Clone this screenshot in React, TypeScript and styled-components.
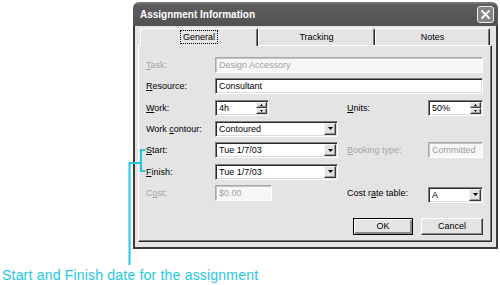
import React from "react";
import styled, { createGlobalStyle, css } from "styled-components";

const Global = createGlobalStyle`
  html, body { margin: 0; padding: 0; background: #fff; }
  body { font-family: "Liberation Sans", Arial, sans-serif; }
`;

const Page = styled.div`
  position: relative;
  width: 500px;
  height: 285px;
  overflow: hidden;
  display: flex;
  flex-direction: column;
  align-items: flex-start;
`;

const Dialog = styled.div`
  margin: 2px 0 0 133px;
  width: 365px;
  display: flex;
  flex-direction: column;
  border-radius: 6px 6px 0 0;
  overflow: hidden;
`;

const TitleBar = styled.div`
  height: 24px;
  box-sizing: border-box;
  display: flex;
  align-items: center;
  justify-content: space-between;
  padding: 0 4px 0 7px;
  background: linear-gradient(#808080 0, #5c5c5c 3px, #525252 100%);
  color: #fff;
  font: bold 10px "Liberation Sans", Arial, sans-serif;
`;

const CloseBtn = styled.div`
  width: 17px;
  height: 17px;
  box-sizing: border-box;
  border: 1px solid #eeeeee;
  border-radius: 3px;
  background: #858585;
  display: flex;
  align-items: center;
  justify-content: center;
`;

const Body = styled.div`
  border: 2px solid #3a3a3a;
  border-top: none;
  background: #e4e4e4;
  padding: 2px 4px 5px 3px;
  display: flex;
  flex-direction: column;
`;

const TabStrip = styled.div`
  display: flex;
  margin: 0 2px;
  height: 17px;
  position: relative;
  z-index: 1;
`;

const Tab = styled.div<{ $w: number; $active?: boolean }>`
  width: ${(p) => p.$w}px;
  height: ${(p) => (p.$active ? 18 : 17)}px;
  box-sizing: border-box;
  border-top: 1px solid #fff;
  border-left: 1px solid #fff;
  border-right: 1px solid #2a2a2a;
  box-shadow: inset -1px 0 #7a7a7a;
  border-radius: 2px 2px 0 0;
  background: #e4e4e4;
  display: flex;
  align-items: center;
  justify-content: center;
  padding-bottom: ${(p) => (p.$active ? 1 : 0)}px;
  font-size: 9px;
  color: #000;
`;

const FocusText = styled.span`
  outline: 1px dotted #000;
  outline-offset: 1px;
  padding: 0 1px;
`;

const Panel = styled.div`
  height: 197px;
  box-sizing: border-box;
  border: 1px solid;
  border-color: #fff #2a2a2a #2a2a2a #fff;
  box-shadow: inset -1px -1px #7a7a7a;
  padding: 11px 8px 0 7px;
  display: flex;
  flex-direction: column;
`;

const FormGrid = styled.div`
  display: grid;
  grid-template-columns: 69px 132px 81px 55px;
  grid-template-rows: repeat(7, 16px);
  row-gap: 5.33px;
  font-size: 9px;
`;

const Label = styled.div<{ $disabled?: boolean }>`
  line-height: 16px;
  white-space: nowrap;
  color: ${(p) => (p.$disabled ? "#a6a6a6" : "#000")};
`;

const Key = styled.span`
  text-decoration: underline;
  text-underline-offset: 1px;
`;

const Box = styled.div<{ $w?: number; $span?: boolean; $disabled?: boolean; $dy?: number }>`
  ${(p) => (p.$span ? css`grid-column: 2 / 5;` : css`width: ${p.$w}px;`)}
  height: 16px;
  box-sizing: border-box;
  margin-top: ${(p) => p.$dy ?? 0}px;
  padding: 1px;
  display: flex;
  align-items: stretch;
  border: 1px solid;
  background: ${(p) => (p.$disabled ? "#f7f7f7" : "#fff")};
  border-color: ${(p) =>
    p.$disabled ? "#a8a8a8 #fff #fff #a8a8a8" : "#808080 #fff #fff #808080"};
  box-shadow: ${(p) =>
    p.$disabled
      ? "inset 1px 1px #c4c4c4"
      : "inset 1px 1px #2a2a2a, inset -1px -1px #dcdcdc"};
  color: ${(p) => (p.$disabled ? "#a0a0a0" : "#000")};
`;

const BoxText = styled.div`
  flex: 1;
  display: flex;
  align-items: center;
  padding-left: 2px;
  white-space: nowrap;
  overflow: hidden;
`;

const raised = css`
  box-sizing: border-box;
  border: 1px solid;
  border-color: #f6f6f6 #3a3a3a #3a3a3a #f6f6f6;
  box-shadow: inset -1px -1px #999;
  background: #e2e2e2;
  display: flex;
  align-items: center;
  justify-content: center;
`;

const DropBtn = styled.div`
  ${raised};
  width: 12px;
`;

const Spinner = styled.div`
  width: 11px;
  display: flex;
  flex-direction: column;
`;

const SpinHalf = styled.div`
  ${raised};
  flex: 1;
`;

const ButtonRow = styled.div`
  display: flex;
  justify-content: flex-end;
  gap: 8px;
  margin-top: 17px;
`;

const Button = styled.div<{ $w: number; $default?: boolean }>`
  width: ${(p) => p.$w}px;
  height: 17px;
  box-sizing: border-box;
  background: #e4e4e4;
  display: flex;
  align-items: center;
  justify-content: center;
  font-size: 9px;
  color: #000;
  border: 1px solid;
  ${(p) =>
    p.$default
      ? css`
          border-color: #000;
          box-shadow: inset 1px 1px #fff, inset -2px -2px #8a8a8a;
        `
      : css`
          border-color: #fff #3a3a3a #3a3a3a #fff;
          box-shadow: inset -1px -1px #8a8a8a;
        `}
`;

const Annot = styled.svg`
  position: absolute;
  left: 0;
  top: 0;
  pointer-events: none;
`;

const Caption = styled.div`
  margin: 18px 0 0 2px;
  font: 14px/16px "Liberation Sans", Arial, sans-serif;
  letter-spacing: 0.2px;
  color: #22c8e2;
  white-space: nowrap;
`;

const Arrow = () => (
  <svg width="5" height="3" viewBox="0 0 5 3">
    <path d="M0 0h5L2.5 3z" fill="#000" />
  </svg>
);

const Tiny = ({ up }: { up?: boolean }) => (
  <svg width="3" height="2" viewBox="0 0 3 2">
    <path d={up ? "M1.5 0L3 2H0z" : "M0 0h3L1.5 2z"} fill="#000" />
  </svg>
);

const Select = ({ w, text, dy }: { w: number; text: string; dy?: number }) => (
  <Box $w={w} $dy={dy}>
    <BoxText>{text}</BoxText>
    <DropBtn>
      <Arrow />
    </DropBtn>
  </Box>
);

const SpinBox = ({ w, text }: { w: number; text: string }) => (
  <Box $w={w}>
    <BoxText>{text}</BoxText>
    <Spinner>
      <SpinHalf>
        <Tiny up />
      </SpinHalf>
      <SpinHalf>
        <Tiny />
      </SpinHalf>
    </Spinner>
  </Box>
);

export default function App() {
  return (
    <>
      <Global />
      <Page>
        <Dialog>
          <TitleBar>
            <span>Assignment Information</span>
            <CloseBtn>
              <svg width="11" height="11" viewBox="0 0 11 11">
                <path d="M1.5 1.5l8 8M9.5 1.5l-8 8" stroke="#fff" strokeWidth="1.8" />
              </svg>
            </CloseBtn>
          </TitleBar>
          <Body>
            <TabStrip>
              <Tab $w={118} $active>
                <FocusText>General</FocusText>
              </Tab>
              <Tab $w={117}>Tracking</Tab>
              <Tab $w={115}>Notes</Tab>
            </TabStrip>
            <Panel>
              <FormGrid>
                <Label $disabled>
                  <Key>T</Key>ask:
                </Label>
                <Box $span $disabled>
                  <BoxText>Design Accessory</BoxText>
                </Box>

                <Label>
                  <Key>R</Key>esource:
                </Label>
                <Box $span>
                  <BoxText>Consultant</BoxText>
                </Box>

                <Label>
                  <Key>W</Key>ork:
                </Label>
                <SpinBox w={54} text="4h" />
                <Label>
                  <Key>U</Key>nits:
                </Label>
                <SpinBox w={55} text="50%" />

                <Label>
                  Work <Key>c</Key>ontour:
                </Label>
                <Select w={123} text="Contoured" />
                <div />
                <div />

                <Label>
                  <Key>S</Key>tart:
                </Label>
                <Select w={123} text="Tue 1/7/03" />
                <Label $disabled>
                  <Key>B</Key>ooking type:
                </Label>
                <Box $w={55} $disabled>
                  <BoxText>Committed</BoxText>
                </Box>

                <Label>
                  <Key>F</Key>inish:
                </Label>
                <Select w={123} text="Tue 1/7/03" />
                <div />
                <div />

                <Label $disabled>
                  C<Key>o</Key>st:
                </Label>
                <Box $w={57} $disabled>
                  <BoxText>$0.00</BoxText>
                </Box>
                <Label>
                  Cost r<Key>a</Key>te table:
                </Label>
                <Select w={55} text="A" dy={2} />
              </FormGrid>
              <ButtonRow>
                <Button $w={60} $default>
                  OK
                </Button>
                <Button $w={62}>Cancel</Button>
              </ButtonRow>
            </Panel>
          </Body>
        </Dialog>
        <Caption>Start and Finish date for the assignment</Caption>
        <Annot width="500" height="285" viewBox="0 0 500 285">
          <polyline
            points="145.5,150 141,150 141,171 145.5,171"
            fill="none"
            stroke="#22c8e2"
            strokeWidth="2"
          />
          <polyline
            points="141,163 129.5,163 129.5,265"
            fill="none"
            stroke="#22c8e2"
            strokeWidth="2"
          />
        </Annot>
      </Page>
    </>
  );
}
